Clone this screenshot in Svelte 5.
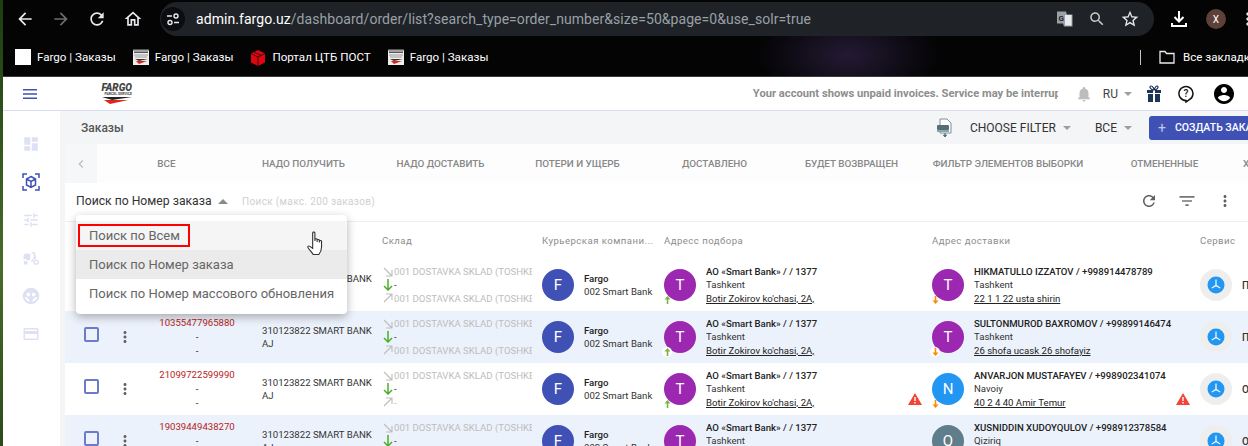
<script>
  const icons = {
    back: 'M20 11H7.83l5.59-5.59L12 4l-8 8 8 8 1.41-1.41L7.83 13H20v-2z',
    forward: 'M12 4l-1.41 1.41L16.17 11H4v2h12.17l-5.58 5.59L12 20l8-8z',
    refresh: 'M17.65 6.35C16.2 4.9 14.21 4 12 4c-4.42 0-7.99 3.58-7.99 8s3.57 8 7.99 8c3.73 0 6.84-2.55 7.73-6h-2.08c-.82 2.33-3.04 4-5.65 4-3.31 0-6-2.69-6-6s2.69-6 6-6c1.66 0 3.14.69 4.22 1.78L13 11h7V4l-2.35 2.35z',
    home: 'M12 5.69l5 4.5V18h-2v-6H9v6H7v-7.81l5-4.5M12 3L2 12h3v8h6v-6h2v6h6v-8h3L12 3z',
    bell: 'M12 22c1.1 0 2-.9 2-2h-4c0 1.1.89 2 2 2zm6-6v-5c0-3.07-1.64-5.64-4.5-6.32V4c0-.83-.67-1.5-1.5-1.5s-1.5.67-1.5 1.5v.68C7.63 5.36 6 7.92 6 11v5l-2 2v1h16v-1l-2-2z',
    star: 'M22 9.24l-7.19-.62L12 2 9.19 8.63 2 9.24l5.46 4.73L5.82 21 12 17.27 18.18 21l-1.63-7.03L22 9.24zM12 15.4l-3.76 2.27 1-4.28-3.32-2.88 4.38-.38L12 6.1l1.71 4.04 4.38.38-3.32 2.88 1 4.28L12 15.4z',
    zoom: 'M15.5 14h-.79l-.28-.27C15.41 12.59 16 11.11 16 9.5 16 5.91 13.09 3 9.5 3S3 5.91 3 9.5 5.91 16 9.5 16c1.61 0 3.09-.59 4.23-1.57l.27.28v.79l5 4.99L20.49 19l-4.99-5zm-6 0C7.01 14 5 11.99 5 9.5S7.01 5 9.5 5 14 7.01 14 9.5 11.99 14 9.5 14z',
    account: 'M12 2C6.48 2 2 6.48 2 12s4.48 10 10 10 10-4.48 10-10S17.52 2 12 2zm0 3c1.66 0 3 1.34 3 3s-1.34 3-3 3-3-1.34-3-3 1.34-3 3-3zm0 14.2c-2.5 0-4.71-1.28-6-3.22.03-1.99 4-3.08 6-3.08 1.99 0 5.97 1.09 6 3.08-1.29 1.94-3.5 3.22-6 3.22z',
    more: 'M12 8c1.1 0 2-.9 2-2s-.9-2-2-2-2 .9-2 2 .9 2 2 2zm0 2c-1.1 0-2 .9-2 2s.9 2 2 2 2-.9 2-2-.9-2-2-2zm0 6c-1.1 0-2 .9-2 2s.9 2 2 2 2-.9 2-2-.9-2-2-2z',
    filter: 'M10 18h4v-2h-4v2zM3 6v2h18V6H3zm3 7h12v-2H6v2z',
    dashboard: 'M3 13h8V3H3v10zm0 8h8v-6H3v6zm10 0h8V11h-8v10zm0-18v6h8V3h-8z',
    tune: 'M3 17v2h6v-2H3zM3 5v2h10V5H3zm10 16v-2h8v-2h-8v-2h-2v6h2zM7 9v2H3v2h4v2h2V9H7zm14 4v-2H11v2h10zm-6-4h2V7h4V5h-4V3h-2v6z',
    card: 'M20 4H4c-1.11 0-1.99.89-1.99 2L2 18c0 1.11.89 2 2 2h16c1.11 0 2-.89 2-2V6c0-1.11-.89-2-2-2zm0 14H4v-6h16v6zm0-10H4V6h16v2z',
    chevron: 'M15.41 7.41L14 6l-6 6 6 6 1.41-1.41L10.83 12z',
    globe: 'M12 1a11 11 0 1 0 0 22 11 11 0 0 0 0-22zM8.500 7.500a2.500 2.500 0 1 1-.01 5 2.500 2.500 0 0 1 .01-5zm7 0a2.500 2.500 0 1 1-.01 5 2.500 2.500 0 0 1 .01-5zM3.500 13c3 .5 6 2 7 6.500C7 19.500 4.500 17 3.500 13zm17 0c-1 4-3.500 6.500-7 6.500 1-4.500 4-6 7-6.500z',
    scooter: 'M2 10c0-3 2-4 4-4h3c1 0 2 1 2 2v7H7a4 4 0 0 0-5-1zM5 15.500a2.800 2.800 0 1 1 0 5.600 2.800 2.800 0 0 1 0-5.600zM13 4h4l2 8.500a4.500 4.500 0 0 0-4 4.500h-3v-2h1.500l2-3.500L15.500 6H13zM19 14a3.500 3.500 0 1 1 0 7 3.500 3.500 0 0 1 0-7zm0 1.800a1.700 1.700 0 1 0 0 3.400 1.700 1.700 0 0 0 0-3.400z'
  };

  const tabs = [
    ['Все', 137], ['Надо получить', 137], ['Надо доставить', 137], ['Потери и ущерб', 137],
    ['Доставлено', 137], ['Будет возвращен', 137], ['Фильтр элементов выборки', 176], ['Отмененные', 137], ['Х', 26]
  ];

  const bookmarks = [
    { label: 'Fargo | Заказы', kind: 'blank' },
    { label: 'Fargo | Заказы', kind: 'fargo' },
    { label: 'Портал ЦТБ ПОСТ', kind: 'box' },
    { label: 'Fargo | Заказы', kind: 'fargo' }
  ];

  const pickup = ['АО «Smart Bank» / / 1377', 'Tashkent', "Botir Zokirov ko'chasi, 2A,"];
  const rows = [
    { no: '10355477965881', out: '001 DOSTAVKA SKLAD (TOSHKENT)', dl: 'T', dc: '#9c27b0', name: 'HIKMATULLO IZZATOV / +998914478789', city: 'Tashkent', addr: '22 1 1 22 usta shirin', svc: 'Приоритет' },
    { no: '10355477965880', out: '001 DOSTAVKA SKLAD (TOSHKENT)', dl: 'T', dc: '#9c27b0', name: 'SULTONMUROD BAXROMOV / +99899146474', city: 'Tashkent', addr: '26 shofa ucask 26 shofayiz', svc: 'Приоритет' },
    { no: '21099722599990', out: '-', dl: 'N', dc: '#2196f3', name: 'ANVARJON MUSTAFAYEV / +998902341074', city: 'Navoiy', addr: '40 2 4 40 Amir Temur', svc: 'Обычный', warn: true },
    { no: '19039449438270', out: '001 DOSTAVKA SKLAD (TOSHKENT)', dl: 'Q', dc: '#607d8b', name: 'XUSNIDDIN XUDOYQULOV / +998912378584', city: 'Qiziriq', addr: '12 3 7 Navoiy', svc: 'Обычный' }
  ];
</script>

{#snippet icon(name, size, color)}
  <svg class="ic" width={size} height={size} viewBox="0 0 24 24" fill={color} fill-rule="evenodd"><path d={icons[name]} /></svg>
{/snippet}

{#snippet caret(color)}
  <svg class="ic" width="8" height="4" viewBox="0 0 8 4" fill={color}><path d="M0 0h8L4 4z" /></svg>
{/snippet}

{#snippet fargoIcon()}
  <svg class="ic" width="16" height="16" viewBox="0 0 16 16">
    <rect width="16" height="16" fill="#eee" />
    <path d="M0 0h16v1.500H0zM1 2.500h14v1.500H1z" fill="#555" />
    <path d="M1 5.500h14v1H1zM2 7.500h12v1H2z" fill="#999" />
    <path d="M2 10h13L6 12z" fill="#333" />
    <path d="M3 12h11l-8 3z" fill="#e2231a" />
  </svg>
{/snippet}

{#snippet warnIcon()}
  <svg class="warn" width="14" height="12" viewBox="0 0 14 12"><path d="M7 0l7 12H0z" fill="#f44336" /><path d="M6.300 4h1.400v4H6.300zM6.300 9h1.400v1.400H6.300z" fill="#fff" /></svg>
{/snippet}

<div class="screen">
  <header class="chrome">
    <div class="toolbar">
      <span class="nav">{@render icon('back', 20, '#e8eaed')}</span>
      <span class="nav">{@render icon('forward', 20, '#6b6d70')}</span>
      <span class="nav">{@render icon('refresh', 20, '#e8eaed')}</span>
      <span class="nav">{@render icon('home', 20, '#e8eaed')}</span>
      <div class="omni">
        <span class="site">
          <svg width="14" height="14" viewBox="0 0 14 14" fill="none" stroke="#e8eaed" stroke-width="1.400"><path d="M1 4h5M8 10.500h5" /><circle cx="10" cy="4" r="2" /><circle cx="4" cy="10.500" r="2" /></svg>
        </span>
        <span class="url"><b>admin.fargo.uz</b>/dashboard/order/list?search_type=order_number&size=50&page=0&use_solr=true</span>
        <span class="omni-end">
          <svg width="18" height="18" viewBox="0 0 18 18"><path d="M1 1.500h9l1 3h5.500v12H8l-1-3H1z" fill="#9aa0a6" /><path d="M9 5h6.500v10.500H9z" fill="#e8eaed" /><text x="2.500" y="11" font-size="8" font-family="Roboto" font-weight="700" fill="#202124">G</text></svg>
          {@render icon('zoom', 18, '#c4c7c5')}
          {@render icon('star', 20, '#e8eaed')}
        </span>
      </div>
      <svg class="dl" width="18" height="18" viewBox="0 0 18 18" fill="none" stroke="#fff" stroke-width="2"><path d="M9 1v10M4.500 7l4.500 4.500L13.500 7M2 13v3h14v-3" /></svg>
      <span class="profile">X</span>
      <span class="kebab">{@render icon('more', 20, '#e8eaed')}</span>
    </div>
    <div class="bookmarks">
      {#each bookmarks as b}
        <span class="bm">
          {#if b.kind === 'blank'}<i class="blank"></i>{/if}
          {#if b.kind === 'fargo'}{@render fargoIcon()}{/if}
          {#if b.kind === 'box'}
            <svg class="ic" width="16" height="17" viewBox="0 0 16 17"><path d="M8 1l7 3.500v9L8 17l-7-3.500v-9z" fill="#e0060f" /><path d="M1 4.500L8 8l7-3.500M8 8v9M4 3l7 3.500" fill="none" stroke="#111" stroke-width=".8" /></svg>
          {/if}
          {b.label}
        </span>
      {/each}
      <span class="bm-right">
        <i class="sep"></i>
        <svg class="ic" width="16" height="14" viewBox="0 0 16 14" fill="none" stroke="#e8eaed" stroke-width="1.300"><path d="M1 1.500h5l1.500 2H15v9.500H1z" /></svg>
        <span>Все закладки</span>
      </span>
    </div>
  </header>

  <div class="app">
    <div class="appbar">
      <div class="bar-left">
        <svg width="14" height="10" viewBox="0 0 14 10" fill="#3f51b5"><path d="M0 0h14v1.400H0zM0 4.300h14v1.400H0zM0 8.600h14V10H0z" /></svg>
        <div class="logo">
          <span class="logo-a">FARGO</span>
          <span class="logo-b">PARCEL SERVICE</span>
          <svg width="30" height="7" viewBox="0 0 30 7"><path d="M0 0h30L10 3z" fill="#222" /><path d="M2 3h24L8 7z" fill="#e2231a" /></svg>
        </div>
      </div>
      <div class="bar-right">
        <span class="notice">Your account shows unpaid invoices. Service may be interrupted. Please pay your invoices</span>
        <span class="bell">{@render icon('bell', 18, '#bdbdbd')}</span>
        <span class="lang">RU {@render caret('#9e9e9e')}</span>
        <svg class="gift" width="14" height="17" viewBox="0 0 14 17" fill="#1d3557"><path d="M0 5h14v3H0zM1 9h12v8H1z" /><path d="M6 5h2v12H6z" fill="#fff" /><path d="M7 5C3 5 2 1 4 1s3 3 3 4 1-4 3-4 1 4-3 4z" fill="none" stroke="#1d3557" stroke-width="1.200" /></svg>
        <svg class="help" width="16" height="18" viewBox="0 0 16 18" fill="none" stroke="#111" stroke-width="1.500"><path d="M8 15.500a7 7 0 1 1 3-.7L8 17z" /><text x="8" y="12" font-size="10" font-weight="500" font-family="Roboto" text-anchor="middle" fill="#111" stroke="none">?</text></svg>
        <span class="acc">{@render icon('account', 24, '#000')}</span>
      </div>
    </div>

    <div class="body">
      <nav class="side">
        {@render icon('dashboard', 18, '#dde1f3')}
        <svg class="ic" width="18" height="18" viewBox="0 0 18 18" fill="none" stroke="#3f51b5" stroke-width="1.500"><path d="M1 5V1h4M13 1h4v4M17 13v4h-4M5 17H1v-4" /><path d="M9 3.500l4.500 2.500v6L9 14.500 4.500 12V6zM4.500 6L9 8.500 13.500 6M9 8.500v6" /></svg>
        {@render icon('tune', 18, '#dde1f3')}
        {@render icon('scooter', 18, '#dde1f3')}
        {@render icon('globe', 18, '#dde1f3')}
        {@render icon('card', 18, '#dde1f3')}
      </nav>

      <main class="main">
        <div class="titlebar">
          <h1>Заказы</h1>
          <div class="title-tools">
            <svg class="xls" width="16" height="20" viewBox="0 0 16 20"><path d="M3 1h7l4 4v10H3z" fill="#fff" stroke="#78909c" /><rect x="0" y="7" width="12" height="5" rx="1" fill="#546e7a" /><path d="M0 12h12v2H0z" fill="#90a4ae" /><path d="M8 15v3M6.500 17L8 19l1.500-2z" stroke="#546e7a" fill="#546e7a" /></svg>
            <span class="pick choose">CHOOSE FILTER {@render caret('#9e9e9e')}</span>
            <span class="pick">ВСЕ {@render caret('#9e9e9e')}</span>
            <span class="create"><span class="plus">+</span>СОЗДАТЬ ЗАКАЗ</span>
          </div>
        </div>

        <section class="panel">
          <div class="tabs">
            <span class="tab-prev">{@render icon('chevron', 16, '#bdbdbd')}</span>
            {#each tabs as [label, w]}
              <span class="tab" style="width: {w}px">{label}</span>
            {/each}
          </div>

          <div class="searchbar">
            <span class="search-type">Поиск по Номер заказа <svg class="ic up" width="10" height="5" viewBox="0 0 10 5" fill="#8a8a8a"><path d="M0 5h10L5 0z" /></svg></span>
            <span class="placeholder">Поиск (макс. 200 заказов)</span>
            <span class="search-tools">
              {@render icon('refresh', 18, '#616161')}
              {@render icon('filter', 20, '#757575')}
              {@render icon('more', 18, '#616161')}
            </span>
          </div>

          <div class="row head">
            <span></span><span></span><span></span><span></span>
            <span>Склад</span>
            <span class="ell">Курьерская компани...</span>
            <span>Адресс подбора</span>
            <span>Адрес доставки</span>
            <span>Сервис</span>
          </div>

          {#each rows as r, i}
            <div class="row item" class:alt={i % 2 === 1}>
              <span class="check"><i></i></span>
              <span class="dots">{@render icon('more', 18, '#616161')}</span>
              <span class="order"><b>{r.no}</b><span>-</span><span>-</span></span>
              <span class="client">310123822 SMART BANK AJ</span>
              <span class="store">
                <span><svg class="ar" width="10" height="10" viewBox="0 0 10 10" fill="none" stroke="#bdbdbd" stroke-width="1.100"><path d="M1 1l8 8M3 9h6V3" /></svg>001 DOSTAVKA SKLAD (TOSHKENT)</span>
                <span class="dark"><svg class="ar" width="10" height="12" viewBox="0 0 10 12" fill="none" stroke="#4caf2a" stroke-width="1.500"><path d="M5 0v11M1 7l4 4 4-4" /></svg>-</span>
                <span><svg class="ar" width="10" height="10" viewBox="0 0 10 10" fill="none" stroke="#bdbdbd" stroke-width="1.100"><path d="M1 9l8-8M3 1h6v6" /></svg>{r.out}</span>
              </span>
              <span class="party">
                <span class="ava" style="background: #3f51b5">F</span>
                <span class="lines two"><b>Fargo</b><span>002 Smart Bank</span></span>
              </span>
              <span class="party">
                <span class="ava" style="background: #9c27b0">T
                  <i class="badge"><svg width="7" height="8" viewBox="0 0 7 8" fill="#7cb342"><path d="M3.500 0L6.500 3.500H4.300V8H2.700V3.500H.5z" /></svg></i>
                </span>
                <span class="lines"><b>{pickup[0]}</b><span>{pickup[1]}</span><u>{pickup[2]}</u></span>
                {#if r.warn}{@render warnIcon()}{/if}
              </span>
              <span class="party">
                <span class="ava" style="background: {r.dc}">{r.dl}
                  <i class="badge"><svg width="7" height="8" viewBox="0 0 7 8" fill="#fb8c00"><path d="M3.500 8L6.500 4.500H4.300V0H2.700V4.500H.5z" /></svg></i>
                </span>
                <span class="lines"><b>{r.name}</b><span>{r.city}</span><u>{r.addr}</u></span>
                {#if r.warn}{@render warnIcon()}{/if}
              </span>
              <span class="party svc">
                <span class="svc-ring"><svg width="18" height="18" viewBox="0 0 18 18"><circle cx="9" cy="9" r="8.500" fill="#2196f3" /><path d="M8.400 3.500h1.200L9.600 9l4 2.700-.6.900L9 10.200 5 12.600l-.6-.9 4-2.700z" fill="#fff" /></svg></span>
                <b class="svc-name">{r.svc}</b>
              </span>
            </div>
          {/each}

          <ul class="menu">
            <li class="hover"><span class="mark">Поиск по Всем</span></li>
            <li class="sel">Поиск по Номер заказа</li>
            <li>Поиск по Номер массового обновления</li>
          </ul>
          <svg class="hand" width="20" height="25" viewBox="0 0 18 25" preserveAspectRatio="none" fill="#fff" stroke="#333" stroke-width="1"><path d="M6 2c0-1.300 2-1.300 2 0v8V8.500c0-1 2-1 2 0V11V9.300c0-1 2-1 2 0V11.500v-1.300c0-1 2-1 2 0V16c0 4-1.500 6-2.500 7.500H6.500C5.500 21.500 4 20 2 17c-1-1.500 0-2.600 1.500-1.600L6 17.500z" /></svg>
        </section>
      </main>
    </div>
  </div>
</div>

<style>
  :global(body) { margin: 0; background: #000; }
  .screen {
    width: 1248px; height: 446px; overflow: hidden; display: flex; flex-direction: column;
    font-family: Roboto, "Liberation Sans", sans-serif;
    background: linear-gradient(#1d3d12, #4a6b28 60%, #2c4a1a);
  }
  .ic { display: block; flex: none; }
  .chrome {
    height: 76px; flex: none; color: #fff; font-family: Roboto, "Noto Sans", sans-serif;
    margin-left: 3px;
    background:
      radial-gradient(ellipse 90px 50px at 845px 55px, #241a33, transparent),
      #040405;
  }
  .toolbar { height: 38px; display: flex; align-items: center; position: relative; padding-left: 4px; }
  .nav { width: 36px; display: flex; justify-content: center; flex: none; }
  .omni {
    position: relative; width: 994px; height: 34px; margin-left: 9px; flex: none; border-radius: 17px; background: #1f2328;
    display: flex; align-items: center; padding-left: 1px; box-sizing: border-box;
  }
  .site { width: 24px; height: 24px; border-radius: 50%; background: #0b0d10; display: flex; align-items: center; justify-content: center; }
  .url { margin-left: 11px; font-size: 14px; color: #9aa0a6; white-space: nowrap; letter-spacing: .06px; }
  .url b { font-weight: 400; color: #fff; }
  .omni-end { margin-left: auto; display: flex; align-items: center; gap: 14px; padding-right: 14px; }
  .dl { margin-left: 16px; flex: none; }
  .profile { width: 20px; height: 20px; border-radius: 50%; background: #5d4037; color: #fff; font-size: 10px; display: flex; align-items: center; justify-content: center; margin-left: 18px; flex: none; }
  .kebab { margin-left: 12px; flex: none; }
  .bookmarks { height: 38px; display: flex; align-items: center; padding-left: 12px; font-size: 11.600px; color: #fff; }
  .bm { display: flex; align-items: center; gap: 6px; margin-right: 17px; white-space: nowrap; }
  .blank { width: 16px; height: 16px; background: #fff; display: block; }
  .bm-right { margin-left: auto; display: flex; align-items: center; white-space: nowrap; }
  .sep { width: 1px; height: 15px; background: #c4c7c5; margin-right: 18px; }
  .bm-right span { margin-left: 8px; width: 65px; overflow: hidden; flex: none; }

  .app { margin-left: 3px; flex: 1; display: flex; flex-direction: column; background: #fff; min-height: 0; }
  .appbar { height: 35px; flex: none; display: flex; align-items: center; justify-content: space-between; border-bottom: 1px solid #d9dcee; box-sizing: border-box; border-top: 1px solid #3a3a3a; }
  .bar-left { display: flex; align-items: center; padding-left: 20px; }
  .logo { margin-left: 64px; display: flex; flex-direction: column; align-items: flex-end; width: 31px; line-height: 1; }
  .logo-a { font-size: 10px; font-weight: 900; font-style: italic; color: #444; line-height: 8px; }
  .logo-b { font-size: 3.500px; font-weight: 700; color: #444; line-height: 5px; white-space: nowrap; }
  .logo svg { display: block; }
  .bar-right { display: flex; align-items: center; height: 100%; }
  .notice { width: 305px; overflow: hidden; white-space: nowrap; font-size: 11.200px; font-weight: 700; color: #8d8d8d; }
  .bell { margin-left: 17px; }
  .lang { margin-left: 10px; display: flex; align-items: center; gap: 6px; font-size: 12px; color: #444; }
  .gift { margin-left: 15px; }
  .help { margin-left: 17px; }
  .acc { margin-left: 18px; margin-right: 12px; }

  .body { flex: 1; display: flex; min-height: 0; }
  .side { width: 57px; flex: none; display: flex; flex-direction: column; align-items: center; padding-top: 24px; gap: 20px; box-sizing: border-box; padding-right: 1px; }
  .main { flex: 1; min-width: 0; background: #f4f5f7; padding-left: 5px; display: flex; flex-direction: column; overflow: hidden; }
  .titlebar { height: 33px; flex: none; display: flex; align-items: center; justify-content: space-between; padding-left: 16px; }
  h1 { margin: 0; font-size: 12px; font-weight: 500; color: #555; }
  .title-tools { display: flex; align-items: center; }
  .xls { margin-right: 17px; }
  .pick { display: flex; align-items: center; gap: 7px; font-size: 12px; color: #333; }
  .choose { margin-right: 24px; }
  .create {
    margin-left: 17px; height: 24px; border-radius: 3px 0 0 3px; background: #3f51b5; color: #fff;
    display: flex; align-items: center; font-size: 10.500px; font-weight: 500; white-space: nowrap; overflow: hidden; padding-left: 9px; box-sizing: border-box;
    margin-right: -10px; width: 109px;
  }
  .plus { font-size: 14px; font-weight: 400; margin-right: 9px; color: #c5cae9; }

  .panel { position: relative; flex: 1; background: #fff; min-height: 0; }
  .tabs { height: 39px; display: flex; align-items: center; background: #fdfdfd; white-space: nowrap; }
  .tab-prev { width: 32px; height: 100%; display: flex; align-items: center; justify-content: center; background: #f6f7f9; flex: none; margin-right: 1px; }
  .tab { flex: none; text-align: center; font-size: 9.900px; font-weight: 500; color: #888; text-transform: uppercase; }
  .searchbar { height: 39px; display: flex; align-items: center; padding: 0 0 2px 11px; border-bottom: 1px solid #eee; box-sizing: border-box; position: relative; }
  .search-type { display: flex; align-items: center; font-size: 12.200px; color: #333; gap: 6px; width: 166px; flex: none; white-space: nowrap; }
  .placeholder { font-size: 10px; color: #d0d0d0; letter-spacing: .35px; }
  .search-tools { margin-left: auto; display: flex; align-items: center; gap: 19px; padding-right: 14px; }

  .row { display: grid; grid-template-columns: 52px 16px 128px 120px 161px 122px 268px 268px 60px; width: 1195px; }
  .head { height: 37px; align-items: center; font-size: 9.600px; color: #8c8c8c; letter-spacing: .46px; white-space: nowrap; }
  .head span:nth-child(5) { padding-left: 1px; }
  .ell { overflow: hidden; }
  .item { height: 52px; align-items: center; font-size: 9.600px; color: #333; }
  .alt { background: #ecf2fb; }
  .check { display: flex; justify-content: center; margin-top: -6px; }
  .check i { width: 11px; height: 11px; border: 2px solid #6b7bc9; border-radius: 2px; display: block; }
  .dots { display: flex; justify-content: center; }
  .order { display: flex; flex-direction: column; align-items: center; line-height: 14px; color: #222; }
  .order b { font-weight: 400; color: #b71c1c; }
  .client { line-height: 13px; padding-right: 4px; padding-left: 1px; }
  .store { display: flex; flex-direction: column; color: #bdbdbd; width: 149px; padding-left: 2px; white-space: nowrap; overflow: hidden; }
  .store > span { display: flex; align-items: center; height: 13.300px; }
  .ar { flex: none; margin-right: 1px; }
  .dark { color: #333; }
  .party { position: relative; display: flex; align-items: center; min-width: 0; }
  .ava { position: relative; width: 32px; height: 32px; border-radius: 50%; flex: none; color: #fff; font-size: 15px; display: flex; align-items: center; justify-content: center; }
  .badge { position: absolute; left: -2px; bottom: -4px; width: 10px; height: 10px; border-radius: 50%; display: flex; align-items: center; justify-content: center; background: transparent; }
  .alt .badge { background: #fff; }
  .lines { margin-left: 10px; display: flex; flex-direction: column; line-height: 13.300px; white-space: nowrap; color: #333; }
  .lines b { font-weight: 500; color: #222; }
  .lines u { color: #222; }
  .warn { position: absolute; right: 10px; bottom: 4px; }
  .svc-ring { width: 32px; height: 32px; border-radius: 50%; background: #eee; display: flex; align-items: center; justify-content: center; flex: none; }
  .svc-name { margin-left: 10px; font-weight: 500; font-size: 10px; white-space: nowrap; }

  .menu {
    position: absolute; left: 11px; top: 71px; width: 271px; height: 99px; margin: 0; padding: 6px 0 0; box-sizing: border-box; list-style: none;
    background: #fff; border-radius: 4px; box-shadow: 0 3px 10px rgba(0,0,0,.3); font-size: 13px; color: #666;
  }
  .menu li { height: 29px; display: flex; align-items: center; padding-left: 13px; white-space: nowrap; }
  .menu .hover { background: #f5f5f5; }
  .menu .sel { background: #ebebeb; }
  .mark { outline: 2.500px solid #f00; padding: 2px 8px 2px 9px; margin-left: -9px; line-height: 15px; }
  .hand { position: absolute; left: 241px; top: 87px; }
</style>
